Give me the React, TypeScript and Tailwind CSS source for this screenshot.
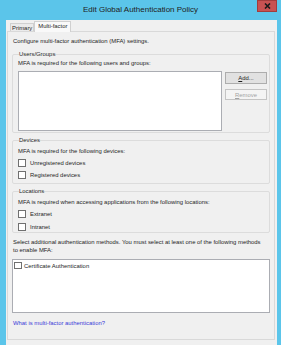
const font = { fontFamily: '"Liberation Sans", Arial, sans-serif' };

function CheckRow({ label }: { label: string }) {
  return (
    <div className="flex items-center h-[8px] gap-[4px]">
      <span className="w-[8px] h-[8px] border border-[#707070] bg-white shrink-0" />
      <span>{label}</span>
    </div>
  );
}

function Group({
  title,
  className,
  children,
}: {
  title: string;
  className?: string;
  children: React.ReactNode;
}) {
  return (
    <fieldset className={`border border-[#dcdcdc] rounded-[2px] px-[5px] ${className ?? ''}`}>
      <legend className="ml-[1px] px-0 leading-[8px]">{title}</legend>
      {children}
    </fieldset>
  );
}

export default function App() {
  return (
    <div
      className="w-[281px] h-[345px] bg-[#5bc5ea] flex flex-col overflow-hidden text-[#1e1e1e]"
      style={font}
    >
      {/* title bar */}
      <div className="h-[20px] grid grid-cols-[1fr_auto_1fr] items-start">
        <div />
        <div className="text-[8px] leading-[20px] text-[#222]">Edit Global Authentication Policy</div>
        <div className="flex justify-end pr-[4px]">
          <div className="w-[20px] h-[12px] bg-[#c75252] border border-[#a33c3c] flex items-center justify-center">
            <svg width="7" height="6" viewBox="0 0 7 6">
              <path d="M1 0.5 L6 5.5 M6 0.5 L1 5.5" stroke="#1a1a1a" strokeWidth="1.6" />
            </svg>
          </div>
        </div>
      </div>

      {/* client area */}
      <div className="flex-1 ml-[6px] mr-[4px] bg-[#f0f0f0] pl-[1px] pr-[2px] text-[5.9px] leading-[8px]">
        <div className="h-[11px] flex items-end pl-[3px]">
          <div className="h-[8px] border border-b-0 border-[#d0d0d0] bg-[#ebebeb] px-[1px] leading-[8px] whitespace-nowrap">
            Primary
          </div>
          <div className="relative z-10 -mb-[1px] h-[11px] border border-b-0 border-[#d0d0d0] bg-[#f9f9f9] px-[3px] leading-[9px] whitespace-nowrap">
            Multi-factor
          </div>
        </div>

        <div className="h-[309px] border border-[#d9d9d9] bg-[#f0f0f0] px-[4px] flex flex-col">
          <div className="mt-[5px] ml-[1px]">Configure multi-factor authentication (MFA) settings.</div>

          <Group title="Users/Groups" className="mt-[5px] pb-[1px] pr-[2px]">
            <div className="mt-[1px]">MFA is required for the following users and groups:</div>
            <div className="mt-[4px] flex gap-[3px]">
              <div className="flex-1 h-[60px] border border-[#abadb3] bg-white" />
              <div className="w-[42px] flex flex-col gap-[5px] pt-[1px]">
                <div className="h-[12px] border border-[#adadad] bg-[#e1e1e1] flex items-center justify-center">
                  <span>
                    <span className="underline">A</span>dd...
                  </span>
                </div>
                <div className="h-[11px] border border-[#c4c4c4] bg-[#f4f4f4] text-[#a3a3a3] flex items-center justify-center">
                  <span>
                    <span className="underline">R</span>emove
                  </span>
                </div>
              </div>
            </div>
          </Group>

          <Group title="Devices" className="mt-[3px] pb-[4px]">
            <div className="mt-[3px]">MFA is required for the following devices:</div>
            <div className="mt-[4px] flex flex-col gap-[4px]">
              <CheckRow label="Unregistered devices" />
              <CheckRow label="Registered devices" />
            </div>
          </Group>

          <Group title="Locations" className="mt-[3px] pb-[1px]">
            <div className="mt-[3px]">MFA is required when accessing applications from the following locations:</div>
            <div className="mt-[4px] flex flex-col gap-[5px]">
              <CheckRow label="Extranet" />
              <CheckRow label="Intranet" />
            </div>
          </Group>

          <div className="mt-[5px] ml-[1px]">
            Select additional authentication methods. You must select at least one of the following methods
            <br />
            to enable MFA:
          </div>

          <div className="mt-[5px] h-[54px] border border-[#abadb3] bg-white pl-[1px] pt-[2px]">
            <div className="flex items-center gap-[2px] h-[7px]">
              <span className="w-[8px] h-[7px] border border-[#707070] bg-white" />
              <span>Certificate Authentication</span>
            </div>
          </div>

          <div className="mt-[6px] ml-[1px] text-[#3b3bd8]">What is multi-factor authentication?</div>
        </div>
      </div>
    </div>
  );
}
